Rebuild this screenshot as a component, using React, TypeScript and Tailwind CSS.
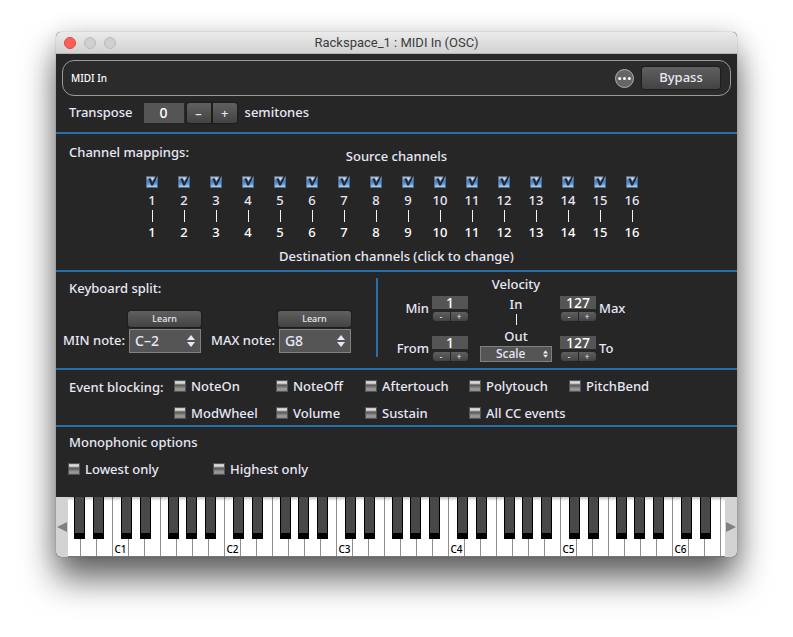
import React, { useState } from 'react';

const CHANNELS = Array.from({ length: 16 }, (_, i) => i + 1);

const NOTES = ['C–2', 'C–1', 'C0', 'C1', 'C2', 'C3', 'C4', 'C5', 'C6', 'C7', 'C8', 'G8'];

const EVENTS = [
  ['NoteOn', 'NoteOff', 'Aftertouch', 'Polytouch', 'PitchBend'],
  ['ModWheel', 'Volume', 'Sustain', 'All CC events'],
];

// Where the black key sits inside the white key to its left
const SHARPS: Record<string, string> = {
  C: 'left-[9px]',
  D: 'left-3',
  F: 'left-2',
  G: 'left-[10px]',
  A: 'left-[13px]',
};

// G0 up to F6, the part of the keyboard that is scrolled into view
const KEYS = Array.from({ length: 42 }, (_, i) => {
  const step = i + 4;
  return { letter: 'CDEFGAB'[step % 7], octave: Math.floor(step / 7) };
});

const BUTTON = 'bg-gradient-to-b from-[#606060] to-[#434343] shadow-[0_0_1px_1px_#1d1d1d]';

interface TickProps {
  label: string;
}

const Tick: React.FC<TickProps> = ({ label }) => {
  return (
    <label className="flex items-center gap-[5px] whitespace-nowrap">
      <input
        type="checkbox"
        className="h-3 w-3 shrink-0 appearance-none border border-[#555] bg-[linear-gradient(#c0c0c0_0,#e4e4e4_2px,#5a5a5a_4px,#666_5px,#9c9c9c_8px,#8a8a8a)] checked:bg-[linear-gradient(#3f79b5,#a9cdf0)]"
      />
      {label}
    </label>
  );
};

const ChannelColumn: React.FC<{ channel: number }> = ({ channel }) => {
  const [target, setTarget] = useState(channel);

  return (
    <div className="flex flex-col items-center leading-4">
      <label className="flex flex-col items-center gap-[2px]">
        <span className="relative h-4 w-3">
          <input
            type="checkbox"
            defaultChecked
            className="peer mt-[2px] block h-3 w-3 appearance-none border border-[#51708c] bg-[linear-gradient(#a9bccd,#a9bccd_2px,#3a78b8_3px,#5b9bd8_7px,#b4d4ee)]"
          />
          <svg viewBox="0 0 14 14" className="pointer-events-none absolute top-0 left-0 hidden h-[14px] w-[14px] peer-checked:block">
            <path d="M2.4 4.6 4.6 4.2 6.2 8.4 9.6 2 12.2.8 7 11.4H5.2z" fill="#242a30" />
            <path d="M5.2 4.2H7.8L6.4 7z" fill="#d5e2ee" />
          </svg>
        </span>
        {channel}
      </label>
      <span className="my-[2px] h-3 w-px bg-[#f4f4ff]" />
      <button type="button" aria-label={`Destination of channel ${channel}`} className="text-white" onClick={() => setTarget((target % 16) + 1)}>
        {target}
      </button>
    </div>
  );
};

interface NoteSelectProps {
  label: string;
  initial: string;
}

const UpDown: React.FC<{ className: string }> = ({ className }) => (
  <svg viewBox="0 0 8 12" className={className} fill="#e8e8f6">
    <path d="M4 0 8 5H0z" />
    <path d="M4 12 0 7h8z" />
  </svg>
);

const NoteSelect: React.FC<NoteSelectProps> = ({ label, initial }) => {
  const id = label.slice(0, 3).toLowerCase() + '-note';
  return (
    <div className="flex items-end gap-[3px]">
      <label htmlFor={id} className="flex h-6 items-center whitespace-nowrap">{label}</label>
      <div className="flex flex-col gap-[2px]">
        <button type="button" className={`h-4 w-[73px] rounded-[3px] text-[9px] leading-4 ${BUTTON}`}>Learn</button>
        <div className="relative ml-px">
          <select
            id={id}
            defaultValue={initial}
            className="h-6 w-[72px] appearance-none border border-[#808080] bg-[#555] pl-[5px] text-sm leading-5"
          >
            {NOTES.map((n) => (
              <option key={n}>{n}</option>
            ))}
          </select>
          <UpDown className="pointer-events-none absolute top-[6px] right-[6px] h-3 w-2" />
        </div>
      </div>
    </div>
  );
};

interface VelocityFieldProps {
  label: string;
  initial: number;
  side: 'left' | 'right';
}

const VelocityField: React.FC<VelocityFieldProps> = ({ label, initial, side }) => {
  const [value, setValue] = useState(initial);
  const id = `velocity-${label.toLowerCase()}`;
  const step = (by: number) => setValue(Math.min(127, Math.max(0, value + by)));

  return (
    <div className={`flex items-center gap-[3px] ${side === 'left' ? 'justify-end' : 'flex-row-reverse justify-end'}`}>
      <label htmlFor={id}>{label}</label>
      <div className="flex w-9 flex-col items-center gap-[3px]">
        <input
          id={id}
          value={value}
          onChange={(e) => setValue(Number(e.target.value) || 0)}
          className="h-[13px] w-9 bg-[#555] text-center text-sm leading-[13px] text-white"
        />
        <div className="flex gap-px text-[8px] leading-[9px]">
          <button type="button" aria-label={`${label} down`} className="h-[9px] w-[17px] rounded-l-[3px] bg-gradient-to-b from-[#606060] to-[#434343]" onClick={() => step(-1)}>-</button>
          <button type="button" aria-label={`${label} up`} className="h-[9px] w-[17px] rounded-r-[3px] bg-gradient-to-b from-[#606060] to-[#434343]" onClick={() => step(1)}>+</button>
        </div>
      </div>
    </div>
  );
};

const Keyboard: React.FC = () => {
  return (
    <div className="flex h-[60px] bg-[#d3d3d3]">
      <button type="button" aria-label="Scroll down" className="flex w-3 shrink-0 items-center justify-center">
        <svg viewBox="0 0 10 10" className="h-[10px] w-[10px]"><path d="M0 5 10 0v10z" fill="#808080" /></svg>
      </button>
      <div className="relative flex flex-1 overflow-hidden border-b border-[#777] bg-white">
        <div className="-ml-1 flex">
          {KEYS.map(({ letter, octave }) => (
            <div key={letter + octave} className="relative flex w-4 shrink-0 items-end justify-center border-l border-[#8f8f8f] pb-px text-[10px] leading-3 text-black">
              {letter === 'C' && octave > 0 ? `C${octave}` : null}
              {SHARPS[letter] && (
                <span className={`absolute top-0 z-10 -ml-px h-[42px] w-[11px] border-x border-b-[6px] border-black bg-[#484848] ${SHARPS[letter]}`} />
              )}
            </div>
          ))}
        </div>
        <div className="pointer-events-none absolute inset-x-0 top-0 h-1 bg-gradient-to-b from-black/25 to-transparent" />
      </div>
      <button type="button" aria-label="Scroll up" className="flex w-3 shrink-0 items-center justify-center">
        <svg viewBox="0 0 10 10" className="h-[10px] w-[10px]"><path d="M10 5 0 0v10z" fill="#808080" /></svg>
      </button>
    </div>
  );
};

export default function App() {
  const [transpose, setTranspose] = useState(0);

  return (
    <div className="min-h-screen bg-white px-14 pt-8 pb-20 font-['Noto_Sans',sans-serif] text-[13px] font-medium text-[#e8e8f6]">
      <main className="overflow-hidden rounded-[5px] bg-[#262626] shadow-[0_0_1px_rgba(0,0,0,0.5),0_0_24px_rgba(0,0,0,0.12),0_22px_34px_rgba(0,0,0,0.6)]">
        <header className="relative flex h-[22px] items-center justify-center border-b border-[#b5b5b5] bg-gradient-to-b from-[#ebebeb] to-[#d2d2d2]">
          <div className="absolute left-2 flex gap-2">
            <button type="button" aria-label="Close" className="h-3 w-3 rounded-full border border-[#e2463f] bg-[#fc605b]" />
            <button type="button" aria-label="Minimize" className="h-3 w-3 rounded-full border border-[#b9b9b9] bg-[#d0d0d0]" />
            <button type="button" aria-label="Zoom" className="h-3 w-3 rounded-full border border-[#b9b9b9] bg-[#d0d0d0]" />
          </div>
          <h1 className="font-['Roboto',sans-serif] text-[13px] font-normal text-[#3c3c3c]">Rackspace_1 : MIDI In (OSC)</h1>
        </header>

        <div className="mx-1.5 mt-1.5 flex h-9 items-center rounded-xl border border-[#9a9a9a] bg-[#2b2b2b] pr-[10px] pl-2">
          <span className="flex-1 text-[10px] text-white">MIDI In</span>
          <button type="button" aria-label="More" className="mr-2 flex h-[19px] w-[19px] items-center justify-center rounded-full border border-[#b0b0b0] bg-[#666]">
            <svg viewBox="0 0 13 3" className="h-[3px] w-[13px]" fill="#fff">
              <circle cx="1.7" cy="1.5" r="1.5" />
              <circle cx="6.5" cy="1.5" r="1.5" />
              <circle cx="11.3" cy="1.5" r="1.5" />
            </svg>
          </button>
          <button type="button" className={`h-[22px] w-[78px] rounded-[3px] ${BUTTON}`}>Bypass</button>
        </div>

        <section className="flex h-[38px] items-center border-b-2 border-[#286ea8] pl-[13px] pb-[3px]">
          <label htmlFor="transpose" className="mr-[11px]">Transpose</label>
          <input
            id="transpose"
            value={transpose}
            onChange={(e) => setTranspose(Number(e.target.value) || 0)}
            className="h-5 w-10 bg-[#555] text-center text-sm text-white"
          />
          <div className="mx-[3px] flex gap-[2px]">
            <button type="button" aria-label="Transpose down" className={`h-5 w-6 rounded-l-[3px] leading-5 ${BUTTON}`} onClick={() => setTranspose(transpose - 1)}>–</button>
            <button type="button" aria-label="Transpose up" className={`h-5 w-6 rounded-r-[3px] leading-5 ${BUTTON}`} onClick={() => setTranspose(transpose + 1)}>+</button>
          </div>
          <span className="ml-[5px]">semitones</span>
        </section>

        <section className="border-b-2 border-[#286ea8] pt-2 pb-1">
          <div className="grid grid-cols-[1fr_auto_1fr] leading-5">
            <h2 className="pl-[13px]">Channel mappings:</h2>
            <p className="pt-1">Source channels</p>
          </div>
          <div className="mx-20 mt-2 grid max-w-[512px] grid-cols-16">
            {CHANNELS.map((c) => (
              <ChannelColumn key={c} channel={c} />
            ))}
          </div>
          <p className="mt-[6px] text-center leading-5">Destination channels (click to change)</p>
        </section>

        <section className="flex h-[98px] border-b-2 border-[#286ea8]">
          <div className="flex w-80 shrink-0 flex-col justify-between pt-[6px] pb-[15px]">
            <h2 className="pl-[13px] leading-5">Keyboard split:</h2>
            <div className="flex gap-[10px] pl-[7px]">
              <NoteSelect label="MIN note:" initial="C–2" />
              <NoteSelect label="MAX note:" initial="G8" />
            </div>
          </div>
          <div className="mt-[6px] mb-[11px] w-[2px] bg-[#286ea8]" />
          <div className="grid grid-cols-[90px_92px_100px]">
            <div className="flex flex-col gap-[15px] pt-6">
              <VelocityField label="Min" initial={1} side="left" />
              <VelocityField label="From" initial={1} side="left" />
            </div>
            <div className="flex flex-col items-center pt-1 pl-1 leading-4">
              <h2 className="leading-4">Velocity</h2>
              <span className="mt-1">In</span>
              <span className="mt-[2px] h-[11px] w-px bg-[#f4f4ff]" />
              <label htmlFor="curve" className="mt-[3px] leading-4">Out</label>
              <div className="relative mt-[2px]">
                <select id="curve" defaultValue="Scale" className="block h-4 w-[72px] appearance-none border border-[#808080] bg-[#555] pl-[15px] text-xs leading-[14px]">
                  <option>Scale</option>
                  <option>Clip</option>
                </select>
                <UpDown className="pointer-events-none absolute top-1 right-1 h-2 w-[5px]" />
              </div>
            </div>
            <div className="flex flex-col gap-[15px] pt-6">
              <VelocityField label="Max" initial={127} side="right" />
              <VelocityField label="To" initial={127} side="right" />
            </div>
          </div>
        </section>

        <section className="flex border-b-2 border-[#286ea8] pt-[6px] pb-[2px] pl-[13px]">
          <h2 className="w-[105px] shrink-0 pt-px leading-5">Event blocking:</h2>
          <div className="flex flex-col gap-[7px] leading-5">
            {EVENTS.map((row) => (
              <div key={row[0]} className="grid grid-cols-[102px_89px_104px_100px_auto]">
                {row.map((name) => (
                  <Tick key={name} label={name} />
                ))}
              </div>
            ))}
          </div>
        </section>

        <section className="flex h-[70px] flex-col gap-[7px] pt-[5px] pl-3 leading-5">
          <h2 className="pl-px">Monophonic options</h2>
          <div className="grid grid-cols-[145px_auto]">
            <Tick label="Lowest only" />
            <Tick label="Highest only" />
          </div>
        </section>

        <Keyboard />
      </main>
    </div>
  );
}
